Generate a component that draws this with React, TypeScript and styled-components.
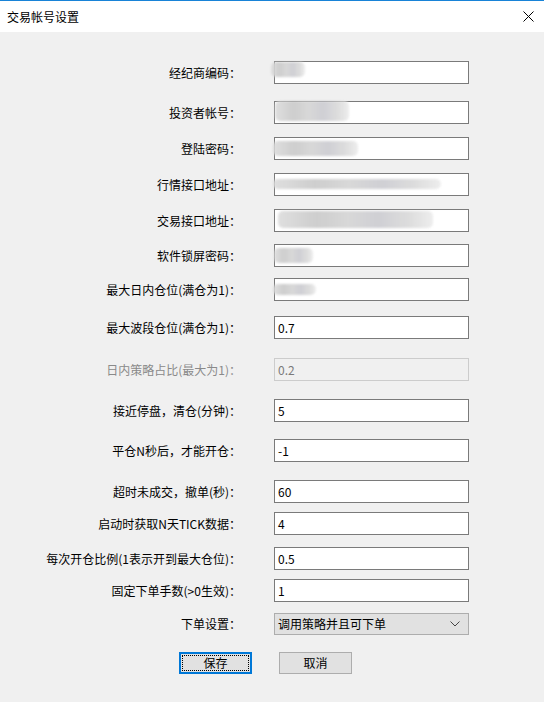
import React from "react";
import styled, { createGlobalStyle, css } from "styled-components";

const GlobalStyle = createGlobalStyle`
  html, body {
    margin: 0;
    padding: 0;
    background: #f0f0f0;
  }
  * {
    box-sizing: border-box;
  }
  body {
    font-family: "Noto Sans CJK SC", "Noto Sans", sans-serif;
    font-size: 12px;
    color: #000;
  }
`;

type Smear = { left: number; top: number; width: number; height: number };

type Row = {
  label: string;
  value?: string;
  gap: number;
  disabled?: boolean;
  smear?: Smear;
};

const ROWS: Row[] = [
  { label: "经纪商编码：", gap: 29, smear: { left: -4, top: 0, width: 34, height: 15 } },
  { label: "投资者帐号：", gap: 17, smear: { left: 0, top: -1, width: 74, height: 20 } },
  { label: "登陆密码：", gap: 13, smear: { left: -2, top: 3, width: 85, height: 15 } },
  { label: "行情接口地址：", gap: 13, smear: { left: -2, top: 5, width: 168, height: 10 } },
  { label: "交易接口地址：", gap: 13, smear: { left: 3, top: 1, width: 155, height: 17 } },
  { label: "软件锁屏密码：", gap: 12, smear: { left: -1, top: 3, width: 39, height: 15 } },
  { label: "最大日内仓位(满仓为1)：", gap: 11, smear: { left: -2, top: 5, width: 43, height: 11 } },
  { label: "最大波段仓位(满仓为1)：", value: "0.7", gap: 15 },
  { label: "日内策略占比(最大为1)：", value: "0.2", gap: 19, disabled: true },
  { label: "接近停盘，清仓(分钟)：", value: "5", gap: 18 },
  { label: "平仓N秒后，才能开仓：", value: "-1", gap: 17 },
  { label: "超时未成交，撤单(秒)：", value: "60", gap: 18 },
  { label: "启动时获取N天TICK数据：", value: "4", gap: 9 },
  { label: "每次开仓比例(1表示开到最大仓位)：", value: "0.5", gap: 12 },
  { label: "固定下单手数(>0生效)：", value: "1", gap: 9 },
];

export default function App() {
  return (
    <>
      <GlobalStyle />
      <Window>
        <TitleBar>
          <Title>交易帐号设置</Title>
          <CloseButton>
            <svg width="11" height="11" viewBox="0 0 11 11">
              <path d="M0.5 0.5 L10.5 10.5 M10.5 0.5 L0.5 10.5" stroke="#000" strokeWidth="1" />
            </svg>
          </CloseButton>
        </TitleBar>
        <Body>
          {ROWS.map((row) => (
            <FormRow key={row.label} $gap={row.gap}>
              <Label $disabled={row.disabled}>{row.label}</Label>
              <Field $disabled={row.disabled}>
                {row.value}
                {row.smear && (
                  <Smudge
                    style={{
                      left: row.smear.left,
                      top: row.smear.top,
                      width: row.smear.width,
                      height: row.smear.height,
                    }}
                  />
                )}
              </Field>
            </FormRow>
          ))}
          <FormRow $gap={11}>
            <Label>下单设置：</Label>
            <Select>
              <span>调用策略并且可下单</span>
              <svg width="10" height="6" viewBox="0 0 10 6">
                <path d="M0.5 0.5 L5 5 L9.5 0.5" fill="none" stroke="#444" strokeWidth="1" />
              </svg>
            </Select>
          </FormRow>
          <Buttons>
            <Button $primary>保存</Button>
            <Button>取消</Button>
          </Buttons>
        </Body>
      </Window>
    </>
  );
}

const Window = styled.div`
  width: 544px;
  height: 702px;
  display: flex;
  flex-direction: column;
  background: #f0f0f0;
  overflow: hidden;
`;

const TitleBar = styled.div`
  height: 32px;
  flex: none;
  display: flex;
  align-items: center;
  justify-content: space-between;
  background: #fff;
  border-top: 1px solid #1883d7;
  padding: 0 10px 0 7px;
`;

const Title = styled.span`
  font-size: 12px;
  line-height: 16px;
`;

const CloseButton = styled.span`
  display: flex;
  align-items: center;
  margin-top: -1px;
`;

const Body = styled.div`
  display: flex;
  flex-direction: column;
`;

const FormRow = styled.div<{ $gap: number }>`
  display: grid;
  grid-template-columns: 241px 195px;
  column-gap: 33px;
  align-items: center;
  margin-top: ${(p) => p.$gap}px;
`;

const Label = styled.label<{ $disabled?: boolean }>`
  text-align: right;
  white-space: nowrap;
  line-height: 16px;
  color: ${(p) => (p.$disabled ? "#8a8a8a" : "#000")};
`;

const Field = styled.div<{ $disabled?: boolean }>`
  position: relative;
  height: 23px;
  padding: 0 3px;
  display: flex;
  align-items: center;
  line-height: 16px;
  background: #fff;
  border: 1px solid #7a7a7a;
  ${(p) =>
    p.$disabled &&
    css`
      background: #f0f0f0;
      border-color: #cccccc;
      color: #7a7a7a;
    `}
`;

const Smudge = styled.span`
  position: absolute;
  border-radius: 5px;
  background: linear-gradient(
    90deg,
    #dcdcdc 0%,
    #c9c9c9 25%,
    #d4d4d4 45%,
    #cbcbd0 65%,
    #dadada 85%,
    #ececec 100%
  );
  filter: blur(0.8px);
  opacity: 0.9;
`;

const Select = styled.div`
  height: 22px;
  padding: 0 8px 0 3px;
  display: flex;
  align-items: center;
  justify-content: space-between;
  background: #e1e1e1;
  border: 1px solid #adadad;
  line-height: 16px;
  font-size: 12px;
`;

const Buttons = styled.div`
  display: flex;
  gap: 27px;
  margin-top: 17px;
  padding-left: 179px;
`;

const Button = styled.button<{ $primary?: boolean }>`
  position: relative;
  width: 73px;
  height: 22px;
  padding: 0;
  font-family: inherit;
  font-size: 12px;
  line-height: 16px;
  color: #000;
  background: #e1e1e1;
  border: 1px solid #adadad;
  ${(p) =>
    p.$primary &&
    css`
      border: 2px solid #0078d7;
      &::after {
        content: "";
        position: absolute;
        inset: 1px;
        border: 1px dotted #000;
      }
    `}
`;
